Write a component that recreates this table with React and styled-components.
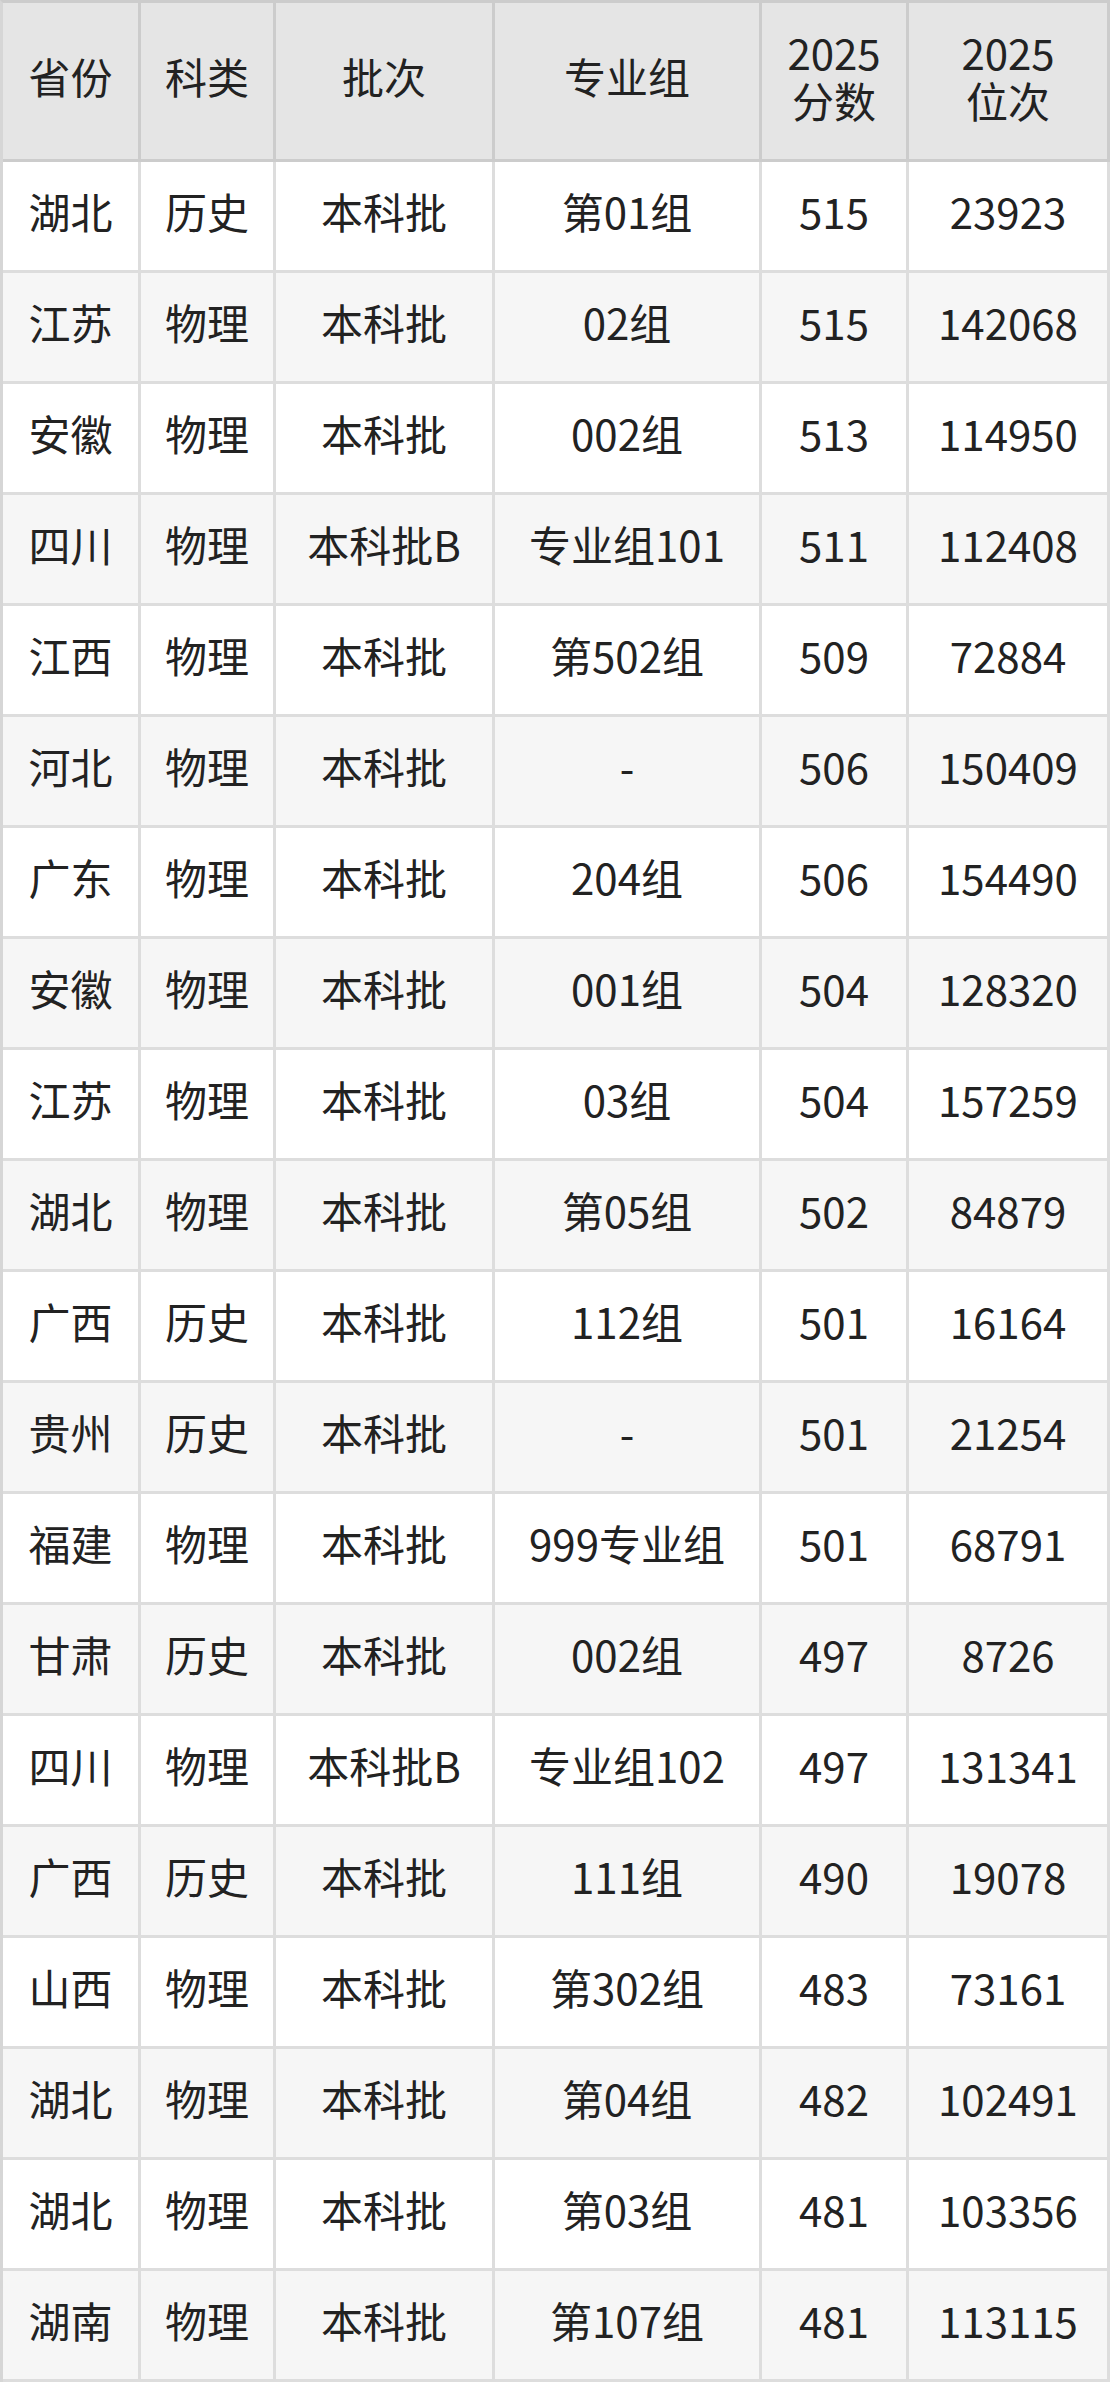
import React from "react";
import styled, { createGlobalStyle } from "styled-components";

const Global = createGlobalStyle`
  * { box-sizing: border-box; }
  html, body { margin: 0; padding: 0; background: #fff; }
  body { font-family: "Noto Sans CJK SC", "Noto Sans", sans-serif; color: #222; }
`;

const Table = styled.table`
  width: 1110px;
  table-layout: fixed;
  border-collapse: separate;
  border-spacing: 0;
  border-top: 3px solid #cccccc;
  border-left: 3px solid #d6d6d6;
  font-size: 42px;
`;

const Th = styled.th`
  height: 159px;
  padding: 0 6px 10px;
  background: #e5e5e5;
  font-weight: 400;
  line-height: 48px;
  text-align: center;
  vertical-align: middle;
  border-right: 3px solid #cccccc;
  border-bottom: 3px solid #cccccc;
`;

const HeadLine = styled.span`
  display: block;
  height: 48px;
`;

const Row = styled.tr`
  background: ${(p) => (p.$alt ? "#f6f6f6" : "#ffffff")};
`;

const Td = styled.td`
  height: 111px;
  padding: 0 6px 10px;
  text-align: center;
  vertical-align: middle;
  line-height: 48px;
  white-space: nowrap;
  border-right: 3px solid #dddddd;
  border-bottom: 3px solid #dddddd;
`;

const widths = [138, 135, 219, 267, 147, 201];

const rows = [
  ["湖北", "历史", "本科批", "第01组", "515", "23923"],
  ["江苏", "物理", "本科批", "02组", "515", "142068"],
  ["安徽", "物理", "本科批", "002组", "513", "114950"],
  ["四川", "物理", "本科批B", "专业组101", "511", "112408"],
  ["江西", "物理", "本科批", "第502组", "509", "72884"],
  ["河北", "物理", "本科批", "-", "506", "150409"],
  ["广东", "物理", "本科批", "204组", "506", "154490"],
  ["安徽", "物理", "本科批", "001组", "504", "128320"],
  ["江苏", "物理", "本科批", "03组", "504", "157259"],
  ["湖北", "物理", "本科批", "第05组", "502", "84879"],
  ["广西", "历史", "本科批", "112组", "501", "16164"],
  ["贵州", "历史", "本科批", "-", "501", "21254"],
  ["福建", "物理", "本科批", "999专业组", "501", "68791"],
  ["甘肃", "历史", "本科批", "002组", "497", "8726"],
  ["四川", "物理", "本科批B", "专业组102", "497", "131341"],
  ["广西", "历史", "本科批", "111组", "490", "19078"],
  ["山西", "物理", "本科批", "第302组", "483", "73161"],
  ["湖北", "物理", "本科批", "第04组", "482", "102491"],
  ["湖北", "物理", "本科批", "第03组", "481", "103356"],
  ["湖南", "物理", "本科批", "第107组", "481", "113115"],
];

export default function App() {
  return (
    <>
      <Global />
      <Table>
        <colgroup>
          {widths.map((w, i) => (
            <col key={i} style={{ width: w }} />
          ))}
        </colgroup>
        <thead>
          <tr>
            <Th>省份</Th>
            <Th>科类</Th>
            <Th>批次</Th>
            <Th>专业组</Th>
            <Th>
              <HeadLine>2025</HeadLine>
              <HeadLine>分数</HeadLine>
            </Th>
            <Th>
              <HeadLine>2025</HeadLine>
              <HeadLine>位次</HeadLine>
            </Th>
          </tr>
        </thead>
        <tbody>
          {rows.map((r, i) => (
            <Row key={i} $alt={i % 2 === 1}>
              {r.map((c, j) => (
                <Td key={j}>{c}</Td>
              ))}
            </Row>
          ))}
        </tbody>
      </Table>
    </>
  );
}
